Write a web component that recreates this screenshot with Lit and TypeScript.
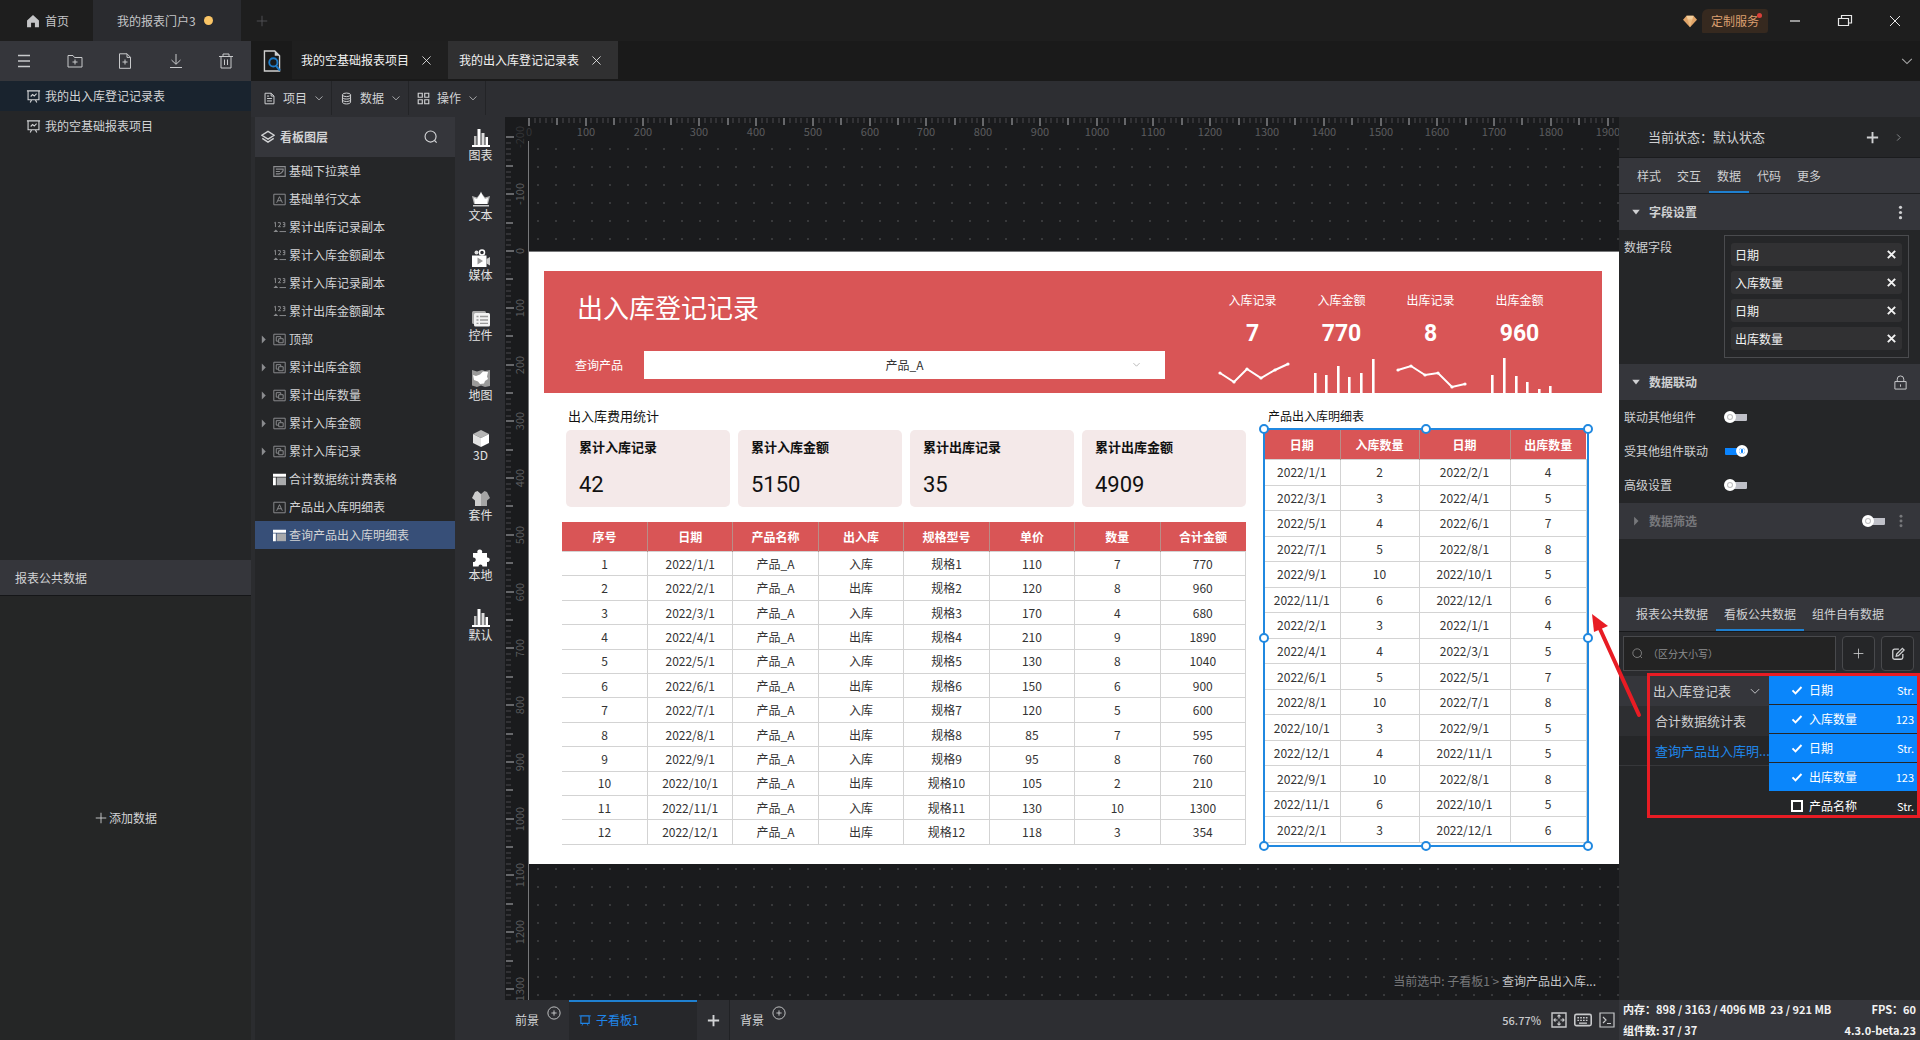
import { LitElement, html, svg, css, nothing, type SVGTemplateResult } from "lit";
import { customElement, property, state } from "lit/decorators.js";
import { classMap } from "lit/directives/class-map.js";

/* ---------- icons ---------- */

const icons: Record<string, SVGTemplateResult> = {
  home: svg`<path d="M8 1 1.200 7.500V15h4.600v-5h4.400v5h4.600V7.500z" fill="currentColor"/>`,
  plus: svg`<path d="M8 2v12M2 8h12" class="s"/>`,
  plusBold: svg`<path d="M8 2v12M2 8h12" class="s" stroke-width="2"/>`,
  burger: svg`<path d="M2 2.500h12M2 8h12M2 13.500h12" class="s" stroke-width="1.600"/>`,
  folderAdd: svg`<path d="M1 2.500h5l1.500 2H15v9.500H1zM8 6.500v5M5.500 9h5" class="s"/>`,
  fileAdd: svg`<path d="M2.500 .8h7.500l3.500 3.500v11h-11zM10 .8v3.600h3.500M8 6.500v5M5.500 9h5" class="s"/>`,
  download: svg`<path d="M8 1v10M3.500 7 8 11.300 12.500 7M2 14.500h12" class="s"/>`,
  trash: svg`<path d="M1 3.500h14M5 3.500V1h6v2.500M3 3.500v11.500h10V3.500M6.500 6.500v5.500M9.500 6.500v5.500" class="s"/>`,
  board: svg`<path d="M1 2h14M2.200 2v9.500h11.600V2M4.500 14.500l1.500-3M11.500 14.500l-1.500-3M5 8l2-2 1.800 1.500L11.300 5" class="s" stroke-width="1.200"/>`,
  close: svg`<path d="M3 3l10 10M13 3 3 13" class="s"/>`,
  closeBold: svg`<path d="M3.500 3.500l9 9M12.500 3.500l-9 9" class="s" stroke-width="2.400"/>`,
  down: svg`<path d="M2.500 5.500 8 11l5.500-5.500" class="s" stroke-width="1.200"/>`,
  right: svg`<path d="M5.500 2.500 11 8l-5.500 5.500" class="s"/>`,
  doc: svg`<path d="M2.500 1.500h7.500l3.500 3.500v9.500h-11zM10 1.500V5h3.500M5 8h6M5 11h6M5 5h2.500" class="s" stroke-width="1.200"/>`,
  db: svg`<ellipse cx="8" cy="3.500" rx="5" ry="2.200" class="s" stroke-width="1.200"/><path d="M3 3.500v9c0 1.200 2.200 2.200 5 2.200s5-1 5-2.200v-9M3 6.500c0 1.200 2.200 2.200 5 2.200s5-1 5-2.200M3 9.500c0 1.200 2.200 2.200 5 2.200s5-1 5-2.200" class="s" stroke-width="1.200"/>`,
  grid: svg`<path d="M1.500 1.500h5v5h-5zM9.500 1.500h5v5h-5zM1.500 9.500h5v5h-5zM9.500 9.500h5v5h-5z" class="s" stroke-width="1.400"/>`,
  layers: svg`<path d="M8 1.500 15 6 8 10.500 1 6zM1.500 9.500 8 13.800l6.500-4.300" class="s" stroke-width="1.600"/>`,
  search: svg`<circle cx="7.500" cy="7.500" r="6.300" class="s" stroke-width="1.300"/><path d="M12 12 14.500 14.500" class="s" stroke-width="1.300"/>`,
  dropdown: svg`<path d="M1 2h14v12H1zM3.500 5h9v2M3.500 8h5M3.500 11h4l3-1.500 2-2.500" class="s" stroke-width="1.400"/>`,
  letter: svg`<path d="M1 1.500h14v13H1zM4.500 12 8 4.500 11.500 12M6 9.500h4" class="s" stroke-width="1.200"/>`,
  digits: svg`<path d="M1.500 2.500 3 1.500v6M6 2h3v2.500L6.500 7H9.500M12 2h2.500v5H12M12.500 4.300h2" class="s" stroke-width="1.200"/><path d="m.5 13.500 3-3 3 3z" fill="currentColor"/><path d="M8 13h8" class="s" stroke-width="1.200"/>`,
  group: svg`<path d="M1 1.500h14v13H1z" class="s" stroke-width="1.200"/><path d="M7 10H4V4.500h5.500V6.500M7 7h5.500v5H7z" class="s" stroke-width="1.200"/>`,
  table: svg`<path d="M0 1h16v3.500H0zM0 5.500h3.500V15H0z" fill="#fff"/><path d="M4.500 5.500H16V15H4.500z" fill="#a9aaac"/>`,
  dots: svg`<circle cx="8" cy="2.500" r="1.700" fill="currentColor"/><circle cx="8" cy="8" r="1.700" fill="currentColor"/><circle cx="8" cy="13.500" r="1.700" fill="currentColor"/>`,
  lock: svg`<path d="M2 7h12v8H2zM4.500 7V4.500a3.500 3.500 0 0 1 7 0V7M8 10v2.500" class="s"/>`,
  edit: svg`<path d="M9 2.500H4a2 2 0 0 0-2 2V12a2 2 0 0 0 2 2h7.500a2 2 0 0 0 2-2V8M6 10.500l.5-2.500L13 1.500l2 2L8.500 10z" class="s" stroke-width="1.500"/>`,
  check: svg`<path d="M2 8.500 6 12.500 14 4" class="s" stroke-width="2.600"/>`,
  caretDown: svg`<path d="M2 4.500h12L8 12z" fill="currentColor"/>`,
  caretRight: svg`<path d="M5 1v14l7-7z" fill="currentColor"/>`,
  circlePlus: svg`<circle cx="8" cy="8" r="7" class="s"/><path d="M8 5v6M5 8h6" class="s"/>`,
  screen: svg`<path d="M2.500 2.500h11v10h-11z" class="s" stroke-width="1.500"/><path d="M0 2.500h2M14 2.500h2M4 15.500l1.500-3M12 15.500l-1.500-3" class="s"/>`,
  minimize: svg`<path d="M3 8h10" class="s" stroke-width="1.200"/>`,
  restore: svg`<path d="M1.500 5.500h10v7h-10zM4.500 5.500v-3h10v7.500h-3" class="s" stroke-width="1.200"/>`,
  diamond: svg`<path d="M4 2h8l4 4.500L8 15 0 6.500z" fill="#e0a468"/><path d="M4 2h8l-1.500 4.500h-5z" fill="#f4cf9c"/><path d="M5.500 6.500h5L8 15z" fill="#edbb80"/>`,
  page: svg`<path d="M2.500 .7h7.500l3.500 3.500V15.300h-11z" class="s"/><path d="M10 .7v3.500h3.500" fill="#cfcfcf"/><circle cx="9" cy="9" r="3" stroke="#1f7cc8" fill="#1a1a1a" stroke-width="1.400"/><path d="m11 11.500 2.800 3.500" stroke="#1f7cc8" stroke-width="1.600"/>`,
  fit: svg`<path d="M1 1h14v14H1z" class="s" stroke-width="1.400"/><path d="M8 3v3.500M8 9.500V13M3 8h3.500M9.500 8H13" class="s" stroke-width="1.200"/><path d="M6.500 4.500 8 3l1.500 1.500M6.500 11.500 8 13l1.500-1.500M4.500 6.500 3 8l1.500 1.500M11.500 6.500 13 8l-1.500 1.500" class="s" stroke-width="1.200"/>`,
  keyboard: svg`<rect x=".7" y="3" width="14.600" height="10" rx="1.500" class="s" stroke-width="1.400"/><path d="M3 6h10M3 8.300h10" class="s" stroke-dasharray="1.500 1" stroke-width="1.200"/><path d="M4.500 10.800h7" class="s" stroke-width="1.200"/>`,
  terminal: svg`<path d="M1 1h14v14H1zM4 5l3 3-3 3M8 11.500h4" class="s" stroke-width="1.200"/>`,
};

const tools: Record<string, SVGTemplateResult> = {
  chart: svg`<path d="M2 7h2.500v9H2z" fill="#bbb"/><path d="M5.500 0h3v16h-3zM13.500 8H16v8h-2.500z" fill="#fff"/><path d="M9.500 4h3v12h-3z" fill="#ddd"/><path d="M0 16h18v2H0z" fill="#fff"/>`,
  crown: svg`<path d="M0 7l5 1.500 4-5 4 5L18 7l-2 8H2z" fill="#b5b5b5"/><path d="M9 2.500C8.500 6 6 8 5 10l-3-1 1 6h12l1-6-3 1c-1-2-3.500-4-4-7.500z" fill="#fff"/><path d="M1 16h16v1.500H1z" fill="#ccc"/>`,
  media: svg`<circle cx="4.500" cy="3.500" r="2" fill="#ddd"/><circle cx="10" cy="3.500" r="2.500" fill="none" stroke="#fff" stroke-width="1.500"/><path d="M0 6.500h14.500V18H0z" fill="#fff"/><path d="m14.500 10 3.500-2v8.500l-3.500-2z" fill="#ccc"/><path d="M5.500 8.500v7l5.500-3.500z" fill="#999"/>`,
  control: svg`<rect x="0" y="2" width="14" height="13" rx="1.500" fill="#aaa"/><rect x="2" y="4" width="16" height="13.500" rx="1.500" fill="#f2f2f2"/><path d="M4.500 7.500h2M4.500 11h2M4.500 14.300h2M8 7.500h8M8 11h8M8 14.300h8" stroke="#999" stroke-width="1.300"/>`,
  map: svg`<path d="m0 1 5 1.500L10 1l3 1 5-1v16l-5 1-4-1.500L5 18l-5-1.500z" fill="#9a9a9a"/><path d="m1 6 3 1 4-1.500 3-3 5 .5-1 4.500 1 2.500-3 2-1 2.500-4 .5-2-2.500-4-1.500z" fill="#fff"/>`,
  cube: svg`<path d="m9 1 8 4-8 4-8-4z" fill="#b5b5b5"/><path d="M1 5l8 4v9l-8-4z" fill="#e2e2e2"/><path d="m17 5-8 4v9l8-4z" fill="#fff"/>`,
  shirt: svg`<path d="M5.500 2 3 3 0 9l3 2.500V17h6V5z" fill="#ccc"/><path d="m12.500 2 2.500 1 3 6-3 2.500V17H9V5z" fill="#a5a5a5"/>`,
  puzzle: svg`<path d="M1 4h4.500a2.500 2.500 0 1 1 4.500 0h5v4.500a2.300 2.300 0 1 1 0 4.500v4.500h-4.500a2 2 0 1 0-4 0H1v-4.500a2.300 2.300 0 1 0 0-4.500z" fill="#fff"/>`,
};

const icon = (name: string, size = 16) =>
  html`<svg class="icon" width=${size} height=${size} viewBox="0 0 16 16" aria-hidden="true">${icons[name]}</svg>`;

const iconStyles = css`
  .icon { display: block; flex: none; }
  .s { fill: none; stroke: currentColor; }
`;

/* ---------- data ---------- */

const layers: { name: string; icon: string; group?: boolean }[] = [
  { name: "基础下拉菜单", icon: "dropdown" },
  { name: "基础单行文本", icon: "letter" },
  { name: "累计出库记录副本", icon: "digits" },
  { name: "累计入库金额副本", icon: "digits" },
  { name: "累计入库记录副本", icon: "digits" },
  { name: "累计出库金额副本", icon: "digits" },
  { name: "顶部", icon: "group", group: true },
  { name: "累计出库金额", icon: "group", group: true },
  { name: "累计出库数量", icon: "group", group: true },
  { name: "累计入库金额", icon: "group", group: true },
  { name: "累计入库记录", icon: "group", group: true },
  { name: "合计数据统计费表格", icon: "table" },
  { name: "产品出入库明细表", icon: "letter" },
  { name: "查询产品出入库明细表", icon: "table" },
];

const toolItems = [
  ["chart", "图表"], ["crown", "文本"], ["media", "媒体"], ["control", "控件"], ["map", "地图"],
  ["cube", "3D"], ["shirt", "套件"], ["puzzle", "本地"], ["chart", "默认"],
];

const recordHead = ["序号", "日期", "产品名称", "出入库", "规格型号", "单价", "数量", "合计金额"];
const recordRows = [
  [110, 7, 770], [120, 8, 960], [170, 4, 680], [210, 9, 1890], [130, 8, 1040], [150, 6, 900],
  [120, 5, 600], [85, 7, 595], [95, 8, 760], [105, 2, 210], [130, 10, 1300], [118, 3, 354],
].map(([price, count, total], i) => [
  i + 1, `2022/${i + 1}/1`, "产品_A", i % 2 ? "出库" : "入库", `规格${i + 1}`, price, count, total,
]);

const detailHead = ["日期", "入库数量", "日期", "出库数量"];
const detailRows = [
  [1, 2, 2, 4], [3, 3, 4, 5], [5, 4, 6, 7], [7, 5, 8, 8], [9, 10, 10, 5], [11, 6, 12, 6], [2, 3, 1, 4],
  [4, 4, 3, 5], [6, 5, 5, 7], [8, 10, 7, 8], [10, 3, 9, 5], [12, 4, 11, 5], [9, 10, 8, 8], [11, 6, 10, 5],
  [2, 3, 12, 6],
].map(([a, b, c, d]) => [`2022/${a}/1`, b, `2022/${c}/1`, d]);

const totals = [
  ["累计入库记录", "42"], ["累计入库金额", "5150"], ["累计出库记录", "35"], ["累计出库金额", "4909"],
];

type Point = [number, number];
const kpis: { label: string; value: string; kind: "line" | "bar"; points: Point[] }[] = [
  { label: "入库记录", value: "7", kind: "line", points: [[12, 18], [26, 27], [39, 14], [53, 23], [67, 15], [80, 9]] },
  { label: "入库金额", value: "770", kind: "bar", points: [[18, 18], [29, 20], [41, 11], [52, 22], [64, 18], [76, 4]] },
  { label: "出库记录", value: "8", kind: "line", points: [[12, 15], [25, 11], [39, 20], [52, 18], [66, 32], [79, 29]] },
  { label: "出库金额", value: "960", kind: "bar", points: [[17, 20], [29, 3], [41, 21], [52, 27], [64, 34], [75, 31]] },
];

const fields = [
  { name: "日期", type: "Str.", on: true },
  { name: "入库数量", type: "123", on: true },
  { name: "日期", type: "Str.", on: true },
  { name: "出库数量", type: "123", on: true },
  { name: "产品名称", type: "Str.", on: false },
];

const UI_FONT = css`"Noto Sans CJK SC", sans-serif`;

/* ---------- ruler ---------- */

@customElement("canvas-ruler")
class CanvasRuler extends LitElement {
  @property({ type: Boolean }) vertical = false;
  @property({ type: Number }) from = 0;
  @property({ type: Number }) to = 1900;
  @property({ type: Number }) origin = 0;

  static styles = css`
    :host { display: block; overflow: hidden; min-width: 0; min-height: 0; }
    .scale { display: block; width: 100%; height: 100%; overflow: hidden; }
    .tick { stroke: #4a4b4e; stroke-width: 1; }
    .mid { stroke: #66676a; stroke-width: 2; }
    .label { fill: #5a5b5e; font: 11px ${UI_FONT}; text-anchor: middle; }
    .faint { opacity: 0.4; }
  `;

  render() {
    const scale = 0.5677;
    const marks: SVGTemplateResult[] = [];
    for (let v = this.from; v <= this.to; v += 10) {
      const p = Math.round(this.origin + v * scale);
      const len = v % 100 === 0 ? 8 : v % 50 === 0 ? 7 : 5;
      const cls = v % 50 === 0 ? "tick mid" : "tick";
      marks.push(this.vertical
        ? svg`<line class=${cls} x1="1" x2=${1 + len} y1=${p} y2=${p}></line>`
        : svg`<line class=${cls} y1="1" y2=${1 + len} x1=${p} x2=${p}></line>`);
      if (v % 100 === 0) {
        const label = p < 30 ? "label faint" : "label";
        marks.push(this.vertical
          ? svg`<text class=${label} transform="translate(19 ${p}) rotate(-90)">${v}</text>`
          : svg`<text class=${label} x=${p} y="19">${v}</text>`);
      }
    }
    return html`<svg class="scale" aria-hidden="true">${marks}</svg>`;
  }
}

/* ---------- report board ---------- */

@customElement("report-board")
class ReportBoard extends LitElement {
  static styles = css`
    :host {
      display: block; background: #fff; padding: 19px 17px 19px 15px; color: #333;
      font: 12px/16px ${UI_FONT};
    }
    .banner { display: flex; justify-content: space-between; height: 122px; background: #d95556; color: #fff; }
    .lead { display: flex; flex-direction: column; flex: 1; max-width: 590px; padding: 18px 0 0 31px; }
    .title { margin: 0 0 22px 2px; font-size: 26px; line-height: 36px; font-weight: 400; color: #fff; }
    .query { display: flex; align-items: center; gap: 21px; padding: 4px 0; }
    .query-box {
      flex: 1; height: 28px; border: 0; border-radius: 0; background: #fff; color: #333; appearance: none;
      font: inherit; text-align: center; text-align-last: center; padding: 0;
    }
    .query-wrap { display: flex; flex: 1; position: relative; }
    .query-arrow { position: absolute; right: 24px; top: 9px; color: #999; }
    .kpis { display: grid; grid-template-columns: repeat(4, 89px); padding-right: 38px; text-align: center; }
    .kpi { display: flex; flex-direction: column; }
    .kpi-label { padding: 21px 0 10px; }
    .kpi-value { font: 700 23px/32px Roboto, sans-serif; }
    .spark { display: block; margin-top: auto; width: 89px; height: 38px; }
    .line { fill: none; stroke: #fff; stroke-width: 2; }
    .dot { fill: #fff; }
    .body { display: grid; grid-template-columns: 684fr 322fr; gap: 18px; padding: 13px 16px 0 18px; }
    .heading { margin: 0; font-size: 12px; line-height: 20px; font-weight: 400; color: #111; padding-left: 4px; }
    .heading.wide { font-size: 13px; padding-left: 6px; }
    .col { display: flex; flex-direction: column; gap: 4px; min-width: 0; }
    .cards { display: grid; grid-template-columns: repeat(4, 1fr); gap: 8px; padding: 0 0 11px 4px; }
    .card { height: 77px; box-sizing: border-box; border-radius: 5px; background: #f4e9e9; padding: 8px 13px; color: #111; }
    .card-name { font-size: 13px; line-height: 18px; font-weight: 600; }
    .card-value { padding-top: 15px; font: 400 22px/28px Roboto, sans-serif; }
    .data { width: 100%; border-collapse: collapse; table-layout: fixed; text-align: center; }
    .records { height: 323px; }
    .details { height: 413px; }
    .data th { height: 29px; padding: 0; background: #d95556; color: #fff; font-weight: 700; border-left: 1px solid #b98d87; }
    .data th:first-child { border-left: 0; }
    .data td { padding: 0; border: 1px solid #d3d3d3; }
    .data td:first-child { border-left: 0; }
    .c1 { width: 76px; } .c2 { width: 79px; } .c3 { width: 91px; } .c4 { width: 76px; }
    .selected { position: relative; }
    .frame { position: absolute; inset: -2px -3px -4px -1px; border: 2px solid #2088e0; pointer-events: none; }
    .handle {
      position: absolute; box-sizing: border-box; width: 10px; height: 10px; border-radius: 50%;
      border: 2px solid #2088e0; background: #fff; transform: translate(-50%, -50%);
    }
    .l { left: -1px; } .m { left: 50%; } .r { left: calc(100% + 1px); }
    .t { top: -1px; } .h { top: 50%; } .b { top: calc(100% + 1px); }
    ${iconStyles}
  `;

  private spark(kind: string, points: Point[]) {
    return html`<svg class="spark" viewBox="0 0 89 38" aria-hidden="true">
      ${kind === "line"
        ? svg`<polyline class="line" points=${points.map((p) => p.join(",")).join(" ")}></polyline>
              ${points.map(([x, y]) => svg`<circle class="dot" cx=${x} cy=${y} r="1.600"></circle>`)}`
        : points.map(([x, y]) => svg`<rect class="dot" x=${x - 1} y=${y} width="2.600" height=${38 - y}></rect>`)}
    </svg>`;
  }

  private table(cls: string, head: string[], rows: (string | number)[][], cols = false) {
    return html`<table class="data ${cls}">
      ${cols ? html`<colgroup><col class="c1" /><col class="c2" /><col class="c3" /><col class="c4" /></colgroup>` : nothing}
      <thead><tr>${head.map((h) => html`<th scope="col">${h}</th>`)}</tr></thead>
      <tbody>${rows.map((r) => html`<tr>${r.map((c) => html`<td>${c}</td>`)}</tr>`)}</tbody>
    </table>`;
  }

  render() {
    return html`
      <section class="banner">
        <div class="lead">
          <h1 class="title">出入库登记记录</h1>
          <div class="query">
            <label for="product">查询产品</label>
            <div class="query-wrap">
              <select class="query-box" id="product"><option>产品_A</option></select>
              <span class="query-arrow">${icon("down", 9)}</span>
            </div>
          </div>
        </div>
        <div class="kpis">
          ${kpis.map((k) => html`<div class="kpi">
            <div class="kpi-label">${k.label}</div>
            <div class="kpi-value">${k.value}</div>
            ${this.spark(k.kind, k.points)}
          </div>`)}
        </div>
      </section>
      <div class="body">
        <div class="col">
          <h2 class="heading wide">出入库费用统计</h2>
          <div class="cards">
            ${totals.map(([n, v]) => html`<div class="card"><div class="card-name">${n}</div><div class="card-value">${v}</div></div>`)}
          </div>
          ${this.table("records", recordHead, recordRows)}
        </div>
        <div class="col">
          <h2 class="heading">产品出入库明细表</h2>
          <div class="selected">
            ${this.table("details", detailHead, detailRows, true)}
            <div class="frame">
              ${["l t", "m t", "r t", "l h", "r h", "l b", "m b", "r b"].map((p) => html`<i class="handle ${p}"></i>`)}
            </div>
          </div>
        </div>
      </div>`;
  }
}

/* ---------- property panel ---------- */

@customElement("property-panel")
class PropertyPanel extends LitElement {
  @state() private checks = fields.map((f) => f.on);

  static styles = css`
    :host { display: flex; flex-direction: column; background: #252628; color: #cfd0d2; font: 12px/16px ${UI_FONT}; position: relative; z-index: 1; }
    button { font: inherit; color: inherit; background: none; border: 0; padding: 0; cursor: pointer; }
    .state { display: flex; align-items: center; gap: 14px; height: 40px; padding: 0 17px 0 29px; border-bottom: 1px solid #1b1c1e; font-size: 13px; }
    .state-text { flex: 1; }
    .tabs { display: flex; height: 35px; padding: 0 10px; background: #35363b; border-bottom: 1px solid #1f2022; }
    .tab { padding: 0 8px; box-sizing: border-box; border-top: 2px solid transparent; border-bottom: 2px solid transparent; }
    .tab.on { border-bottom-color: #1f80d0; }
    .head { display: flex; align-items: center; gap: 8px; height: 36px; box-sizing: border-box; padding: 0 12px; background: #35363b; }
    .head-name { flex: 1; margin: 0; font-size: 12px; font-weight: 600; }
    .off { color: #77787b; }
    .fields { display: flex; padding: 5px 11px 6px 5px; }
    .fields-label { flex: 1; padding-top: 4px; }
    .chips { display: flex; flex-direction: column; gap: 5px; width: 171px; padding: 7px 6px; border: 1px solid #4a4b4e; }
    .chip { display: flex; align-items: center; justify-content: space-between; height: 23px; padding: 0 4px; border-radius: 3px; background: #313133; color: #f2f2f2; }
    .links { display: flex; flex-direction: column; padding: 0 5px 1px; }
    .link-row { display: flex; align-items: center; height: 34px; }
    .link-label { width: 100px; }
    .switch { appearance: none; position: relative; width: 24px; height: 12px; margin: 0; border-radius: 6px; background: linear-gradient(#bfc0c8, #bfc0c8) center / 22px 7px no-repeat; }
    .switch::before { content: ""; position: absolute; left: 0; top: 0; width: 4px; height: 4px; border: 1px solid #bbb; border-radius: 50%; outline: 3px solid #fff; margin: 3px; background: #fff; }
    .switch:checked { background-image: linear-gradient(#0a84ff, #0a84ff); }
    .switch:checked::before { left: 12px; border-color: #fff; background: linear-gradient(90deg, #fff 1px, #0a84ff 1px 3px, #fff 3px); }
    .spacer { flex: 0 0 58px; }
    .source { display: flex; height: 34px; padding: 0 9px; background: #35363b; border-bottom: 1px solid #18191b; }
    .search { display: flex; gap: 6px; padding: 4px 6px 5px 4px; background: #2a2b2e; }
    .search-box { display: flex; align-items: center; gap: 5px; flex: 1; height: 33px; padding: 0 8px; border: 1px solid #48494c; background: #232323; color: #888; min-width: 0; }
    .search-input { flex: 1; min-width: 0; height: 20px; border: 0; background: none; font: inherit; font-size: 10px; color: #ccc; padding: 0; outline: 0; }
    .search-input::placeholder { color: #8d8e90; }
    .square { display: grid; place-items: center; width: 33px; height: 35px; border: 1px solid #48494c; border-radius: 4px; box-sizing: border-box; background: #252628; }
    .tree { display: flex; flex: 1; position: relative; }
    .nodes { flex: 1; min-width: 0; font-size: 13px; line-height: 20px; white-space: nowrap; }
    .node { display: flex; align-items: center; justify-content: space-between; width: 100%; height: 30px; box-sizing: border-box; padding: 0 8px 0 36px; text-align: left; }
    .node.open { background: #35363b; padding-left: 34px; }
    .node.alt { background: #2d2e31; }
    .node.current { color: #1f86ea; border-bottom: 1px solid #36373a; padding-right: 0; }
    .columns { display: flex; flex-direction: column; gap: 1px; width: 151px; }
    .column { display: flex; align-items: center; gap: 6px; height: 28px; padding: 0 6px 0 22px; color: #fff; }
    .column.on { background: #0a86fb; }
    .column-name { flex: 1; }
    .column-type { font-size: 11px; }
    .column-box { appearance: none; width: 12px; height: 12px; margin: 0; border: 2px solid #fff; box-sizing: border-box; }
    .on .column-box { position: absolute; opacity: 0; }
    .mark { position: absolute; left: 28px; right: 0; top: -3px; height: 139px; border: 3px solid #e81c24; pointer-events: none; }
    .arrow { position: absolute; left: -28px; top: -63px; width: 52px; height: 108px; pointer-events: none; }
    .status { display: grid; grid-template-columns: auto auto; justify-content: space-between; align-content: space-between; height: 40px; box-sizing: border-box; padding: 0 4px 1px; background: #35363b; color: #f2f2f2; font-size: 11px; line-height: 18px; font-weight: 700; white-space: nowrap; }
    .end { text-align: right; }
    ${iconStyles}
  `;

  private toggle(i: number) {
    this.checks = this.checks.map((c, n) => (n === i ? !c : c));
  }

  render() {
    return html`
      <div class="state">
        <span class="state-text">当前状态：默认状态</span>
        <button aria-label="新增状态">${icon("plusBold", 15)}</button>
        <button aria-label="展开">${icon("right", 9)}</button>
      </div>
      <nav class="tabs">
        ${["样式", "交互", "数据", "代码", "更多"].map((t) => html`<button class=${classMap({ tab: true, on: t === "数据" })}>${t}</button>`)}
      </nav>
      <div class="head">
        ${icon("caretDown", 10)}<h3 class="head-name">字段设置</h3><button aria-label="更多选项">${icon("dots", 15)}</button>
      </div>
      <div class="fields">
        <span class="fields-label">数据字段</span>
        <div class="chips">
          ${["日期", "入库数量", "日期", "出库数量"].map((c) => html`<div class="chip">${c}<button aria-label="移除">${icon("closeBold", 13)}</button></div>`)}
        </div>
      </div>
      <div class="head">
        ${icon("caretDown", 10)}<h3 class="head-name">数据联动</h3><button aria-label="锁定">${icon("lock", 15)}</button>
      </div>
      <div class="links">
        ${["联动其他组件", "受其他组件联动", "高级设置"].map((l, i) => html`<div class="link-row">
          <label class="link-label" for="sw${i}">${l}</label>
          <input class="switch" id="sw${i}" type="checkbox" ?checked=${i === 1} />
        </div>`)}
      </div>
      <div class="head off">
        ${icon("caretRight", 10)}<label class="head-name" for="filter">数据筛选</label>
        <input class="switch" id="filter" type="checkbox" />
        <button aria-label="更多选项">${icon("dots", 14)}</button>
      </div>
      <div class="spacer"></div>
      <nav class="source">
        ${["报表公共数据", "看板公共数据", "组件自有数据"].map((t, i) => html`<button class=${classMap({ tab: true, on: i === 1 })}>${t}</button>`)}
      </nav>
      <div class="search">
        <div class="search-box">${icon("search", 11)}<input class="search-input" aria-label="搜索" placeholder="（区分大小写）" /></div>
        <button class="square" aria-label="新增">${icon("plus", 13)}</button>
        <button class="square" aria-label="编辑">${icon("edit", 14)}</button>
      </div>
      <div class="tree">
        <div class="nodes">
          <button class="node open">出入库登记表${icon("down", 12)}</button>
          <button class="node alt">合计数据统计表</button>
          <button class="node current">查询产品出入库明...</button>
        </div>
        <div class="columns">
          ${fields.map((f, i) => html`<label class=${classMap({ column: true, on: this.checks[i] })}>
            <input class="column-box" type="checkbox" .checked=${this.checks[i]} @change=${() => this.toggle(i)} />
            ${this.checks[i] ? icon("check", 12) : nothing}
            <span class="column-name">${f.name}</span><span class="column-type">${f.type}</span>
          </label>`)}
        </div>
        <div class="mark"></div>
        <svg class="arrow" viewBox="0 0 52 108" aria-hidden="true">
          <path d="M48 102 9 16" stroke="#e81c24" stroke-width="4" stroke-linecap="round"/>
          <path d="M1 1 3 19 17 13z" fill="#e81c24"/>
        </svg>
      </div>
      <div class="status">
        <span>内存：898 / 3163 / 4096 MB&nbsp; 23 / 921 MB</span><span class="end">FPS：60</span>
        <span>组件数: 37 / 37</span><span class="end">4.3.0-beta.23</span>
      </div>`;
  }
}

/* ---------- application shell ---------- */

@customElement("app-root")
class AppRoot extends LitElement {
  @state() private selected = layers.length - 1;

  static styles = css`
    :host { display: flex; flex-direction: column; height: 100vh; overflow: hidden; background: #252628; color: #d2d3d5; font: 12px/16px ${UI_FONT}; }
    button { font: inherit; color: inherit; background: none; border: 0; padding: 0; cursor: pointer; }
    .titlebar { display: flex; height: 41px; background: #1e1e1e; color: #c4c5c7; }
    .win-tab { display: flex; align-items: center; gap: 5px; padding: 0 24px 0 26px; }
    .win-tab.on { background: #2a2b2f; gap: 8px; padding: 0 28px 0 24px; }
    .unsaved { width: 9px; height: 9px; border-radius: 50%; background: #fac566; }
    .add-tab { padding: 0 14px; color: #55565a; }
    .win-tools { display: flex; align-items: center; margin-left: auto; color: #e8e8e8; }
    .service { display: flex; align-items: center; gap: 5px; margin-right: 2px; color: #dc9f70; text-decoration: none; }
    .service-tag { position: relative; line-height: 24px; padding: 0 9px; border-radius: 6px 3px 3px 1px; background: #36291f; }
    .badge { position: absolute; right: 6px; top: 4px; width: 5px; height: 5px; border-radius: 50%; background: #d9403a; }
    .win-btn { display: grid; place-items: center; width: 50px; height: 41px; }
    .frame { display: flex; flex: 1; min-height: 0; }
    .files { display: flex; flex-direction: column; width: 251px; }
    .file-tools { display: flex; justify-content: space-between; align-items: center; height: 40px; padding: 0 17px 0 16px; background: #35363b; color: #c8c9cb; }
    .file { display: flex; align-items: center; gap: 4px; height: 30px; padding: 0 26px; text-align: left; }
    .file.on { background: #19232e; }
    .file-list { display: flex; flex-direction: column; flex: 1; }
    .public { flex: 0 0 35px; line-height: 35px; padding-left: 15px; background: #35363b; border-bottom: 1px solid #151618; }
    .public-body { display: grid; place-items: center; flex: 0 0 444px; background: #252626; }
    .add-data { display: flex; align-items: center; gap: 1px; }
    .work { display: flex; flex-direction: column; flex: 1; min-width: 0; }
    .doc-tabs { display: flex; height: 40px; background: #1a1a1a; color: #f2f2f2; }
    .doc-logo { display: grid; place-items: center; width: 41px; color: #cfcfcf; }
    .doc-tab { display: flex; align-items: center; gap: 11px; height: 38px; padding: 0 15px 0 9px; background: #1f1f1f; }
    .doc-tab.on { background: #303031; padding-left: 11px; }
    .doc-more { margin-left: auto; padding: 0 6px; color: #aaa; }
    .menubar { display: flex; height: 36px; box-sizing: border-box; background: #2d2e32; padding: 0 0 2px 4px; }
    .menu { display: flex; align-items: center; gap: 7px; padding: 0 7px 0 8px; border-right: 1px solid #232427; }
    .content { display: flex; flex: 1; min-height: 0; padding-left: 4px; background: #2b2c2f; }
    .layers { display: flex; flex-direction: column; width: 200px; background: #252628; }
    .layers-head { display: flex; align-items: center; gap: 5px; height: 40px; padding: 0 17px 0 6px; background: #35363b; }
    .layers-title { flex: 1; margin: 0; font-size: 12px; font-weight: 600; }
    .layer { display: flex; align-items: center; height: 28px; gap: 3px; padding-left: 4px; text-align: left; }
    .layer.on { background: #374f78; }
    .twist { width: 11px; color: #8b8c8f; }
    .glyph { width: 13px; color: #8b8c8f; }
    .strip { display: flex; flex-direction: column; width: 50px; box-sizing: border-box; padding: 12px 0 0 1px; background: #2d2e32; }
    .tool { display: flex; flex-direction: column; align-items: center; justify-content: flex-start; height: 60px; line-height: 16px; padding-bottom: 26px; box-sizing: border-box; color: #e2e2e2; }
    .editor { display: flex; flex-direction: column; flex: 1; min-width: 0; }
    .canvas { display: grid; grid-template: 24px 1fr / 24px 1fr; flex: 1; min-height: 0; background: #1a1b1d; overflow: hidden; }
    .ruler-x { grid-area: 1 / 1 / 2 / 3; }
    .ruler-y { grid-area: 1 / 1 / 3 / 2; }
    .stage { grid-area: 2 / 2 / 3 / 3; position: relative; overflow: hidden; border-left: 1px solid #77787a; margin-left: -1px; padding-top: 110px; background: radial-gradient(circle, #38393b 1px, transparent 1px) 0 -1px / 18px 18px; }
    .sheet { border-top: 1px solid #77787a; }
    .crumb { position: absolute; right: 23px; bottom: 11px; margin: 0; color: #77787a; }
    .crumb-now { color: #c4c5c7; }
    .bottom { display: flex; height: 40px; background: #2d2e32; }
    .scene { display: flex; align-items: center; gap: 8px; padding: 0 8px 0 10px; }
    .scene-add { padding-bottom: 14px; }
    .scene-tab { display: flex; align-items: center; gap: 5px; width: 128px; box-sizing: border-box; padding: 0 10px 2px; border-top: 2px solid #1f80d0; background: #26272a; color: #1f86ea; }
    .scene-plus { display: grid; place-items: center; width: 33px; border-right: 1px solid #212225; }
    .zoom-tools { display: flex; align-items: center; margin-left: auto; color: #c8c9cb; }
    .zoom-value { padding-right: 6px; font-size: 11px; font-weight: 500; }
    .zoom-btn { display: grid; place-items: center; width: 24px; height: 32px; }
    .props { width: 301px; flex: none; }
    ${iconStyles}
  `;

  render() {
    return html`
      <header class="titlebar">
        <button class="win-tab">${icon("home", 14)}首页</button>
        <button class="win-tab on">我的报表门户3<i class="unsaved"></i></button>
        <button class="add-tab" aria-label="新建标签">${icon("plus", 14)}</button>
        <div class="win-tools">
          <a class="service" href="#service">${icon("diamond", 14)}<span class="service-tag">定制服务<i class="badge"></i></span></a>
          <button class="win-btn" aria-label="最小化">${icon("minimize")}</button>
          <button class="win-btn" aria-label="还原">${icon("restore")}</button>
          <button class="win-btn" aria-label="关闭">${icon("close")}</button>
        </div>
      </header>
      <div class="frame">
        <aside class="files">
          <div class="file-tools">
            ${[["burger", "菜单"], ["folderAdd", "新建文件夹"], ["fileAdd", "新建文件"], ["download", "导入"], ["trash", "删除"]].map(
              ([i, l]) => html`<button aria-label=${l}>${icon(i, 16)}</button>`)}
          </div>
          <div class="file-list">
            <button class="file on">${icon("board", 15)}我的出入库登记记录表</button>
            <button class="file">${icon("board", 15)}我的空基础报表项目</button>
          </div>
          <div class="public">报表公共数据</div>
          <div class="public-body"><button class="add-data">${icon("plus", 14)}添加数据</button></div>
        </aside>
        <main class="work">
          <div class="doc-tabs">
            <div class="doc-logo">${icon("page", 22)}</div>
            <div class="doc-tab">我的空基础报表项目<button aria-label="关闭标签">${icon("close", 13)}</button></div>
            <div class="doc-tab on">我的出入库登记记录表<button aria-label="关闭标签">${icon("close", 13)}</button></div>
            <button class="doc-more" aria-label="全部标签">${icon("down", 14)}</button>
          </div>
          <div class="menubar">
            ${[["doc", "项目"], ["db", "数据"], ["grid", "操作"]].map(
              ([i, l]) => html`<button class="menu">${icon(i, 13)}${l}${icon("down", 10)}</button>`)}
          </div>
          <div class="content">
            <section class="layers">
              <div class="layers-head">${icon("layers", 14)}<h2 class="layers-title">看板图层</h2><button aria-label="搜索图层">${icon("search", 14)}</button></div>
              ${layers.map((l, i) => html`<button class=${classMap({ layer: true, on: i === this.selected })} @click=${() => (this.selected = i)}>
                <span class="twist">${l.group ? icon("caretRight", 9) : nothing}</span>
                <span class="glyph">${icon(l.icon, 13)}</span>${l.name}
              </button>`)}
            </section>
            <nav class="strip">
              ${toolItems.map(([i, l]) => html`<button class="tool"><svg class="icon" width="18" height="18" viewBox="0 0 18 18" aria-hidden="true">${tools[i]}</svg>${l}</button>`)}
            </nav>
            <section class="editor">
              <div class="canvas">
                <canvas-ruler class="ruler-x" .to=${1910} .origin=${24}></canvas-ruler>
                <canvas-ruler class="ruler-y" vertical .from=${-200} .to=${1310} .origin=${134}></canvas-ruler>
                <div class="stage">
                  <div class="sheet"><report-board></report-board></div>
                  <p class="crumb">当前选中: 子看板1 &gt; <span class="crumb-now">查询产品出入库...</span></p>
                </div>
              </div>
              <div class="bottom">
                <div class="scene">前景<button class="scene-add" aria-label="添加前景">${icon("circlePlus", 14)}</button></div>
                <button class="scene-tab">${icon("screen", 12)}子看板1</button>
                <button class="scene-plus" aria-label="新增看板">${icon("plusBold", 15)}</button>
                <div class="scene">背景<button class="scene-add" aria-label="添加背景">${icon("circlePlus", 14)}</button></div>
                <div class="zoom-tools">
                  <span class="zoom-value">56.77%</span>
                  <button class="zoom-btn" aria-label="适应画布">${icon("fit")}</button>
                  <button class="zoom-btn" aria-label="快捷键">${icon("keyboard", 18)}</button>
                  <button class="zoom-btn" aria-label="控制台">${icon("terminal")}</button>
                </div>
              </div>
            </section>
            <property-panel class="props"></property-panel>
          </div>
        </main>
      </div>`;
  }
}
